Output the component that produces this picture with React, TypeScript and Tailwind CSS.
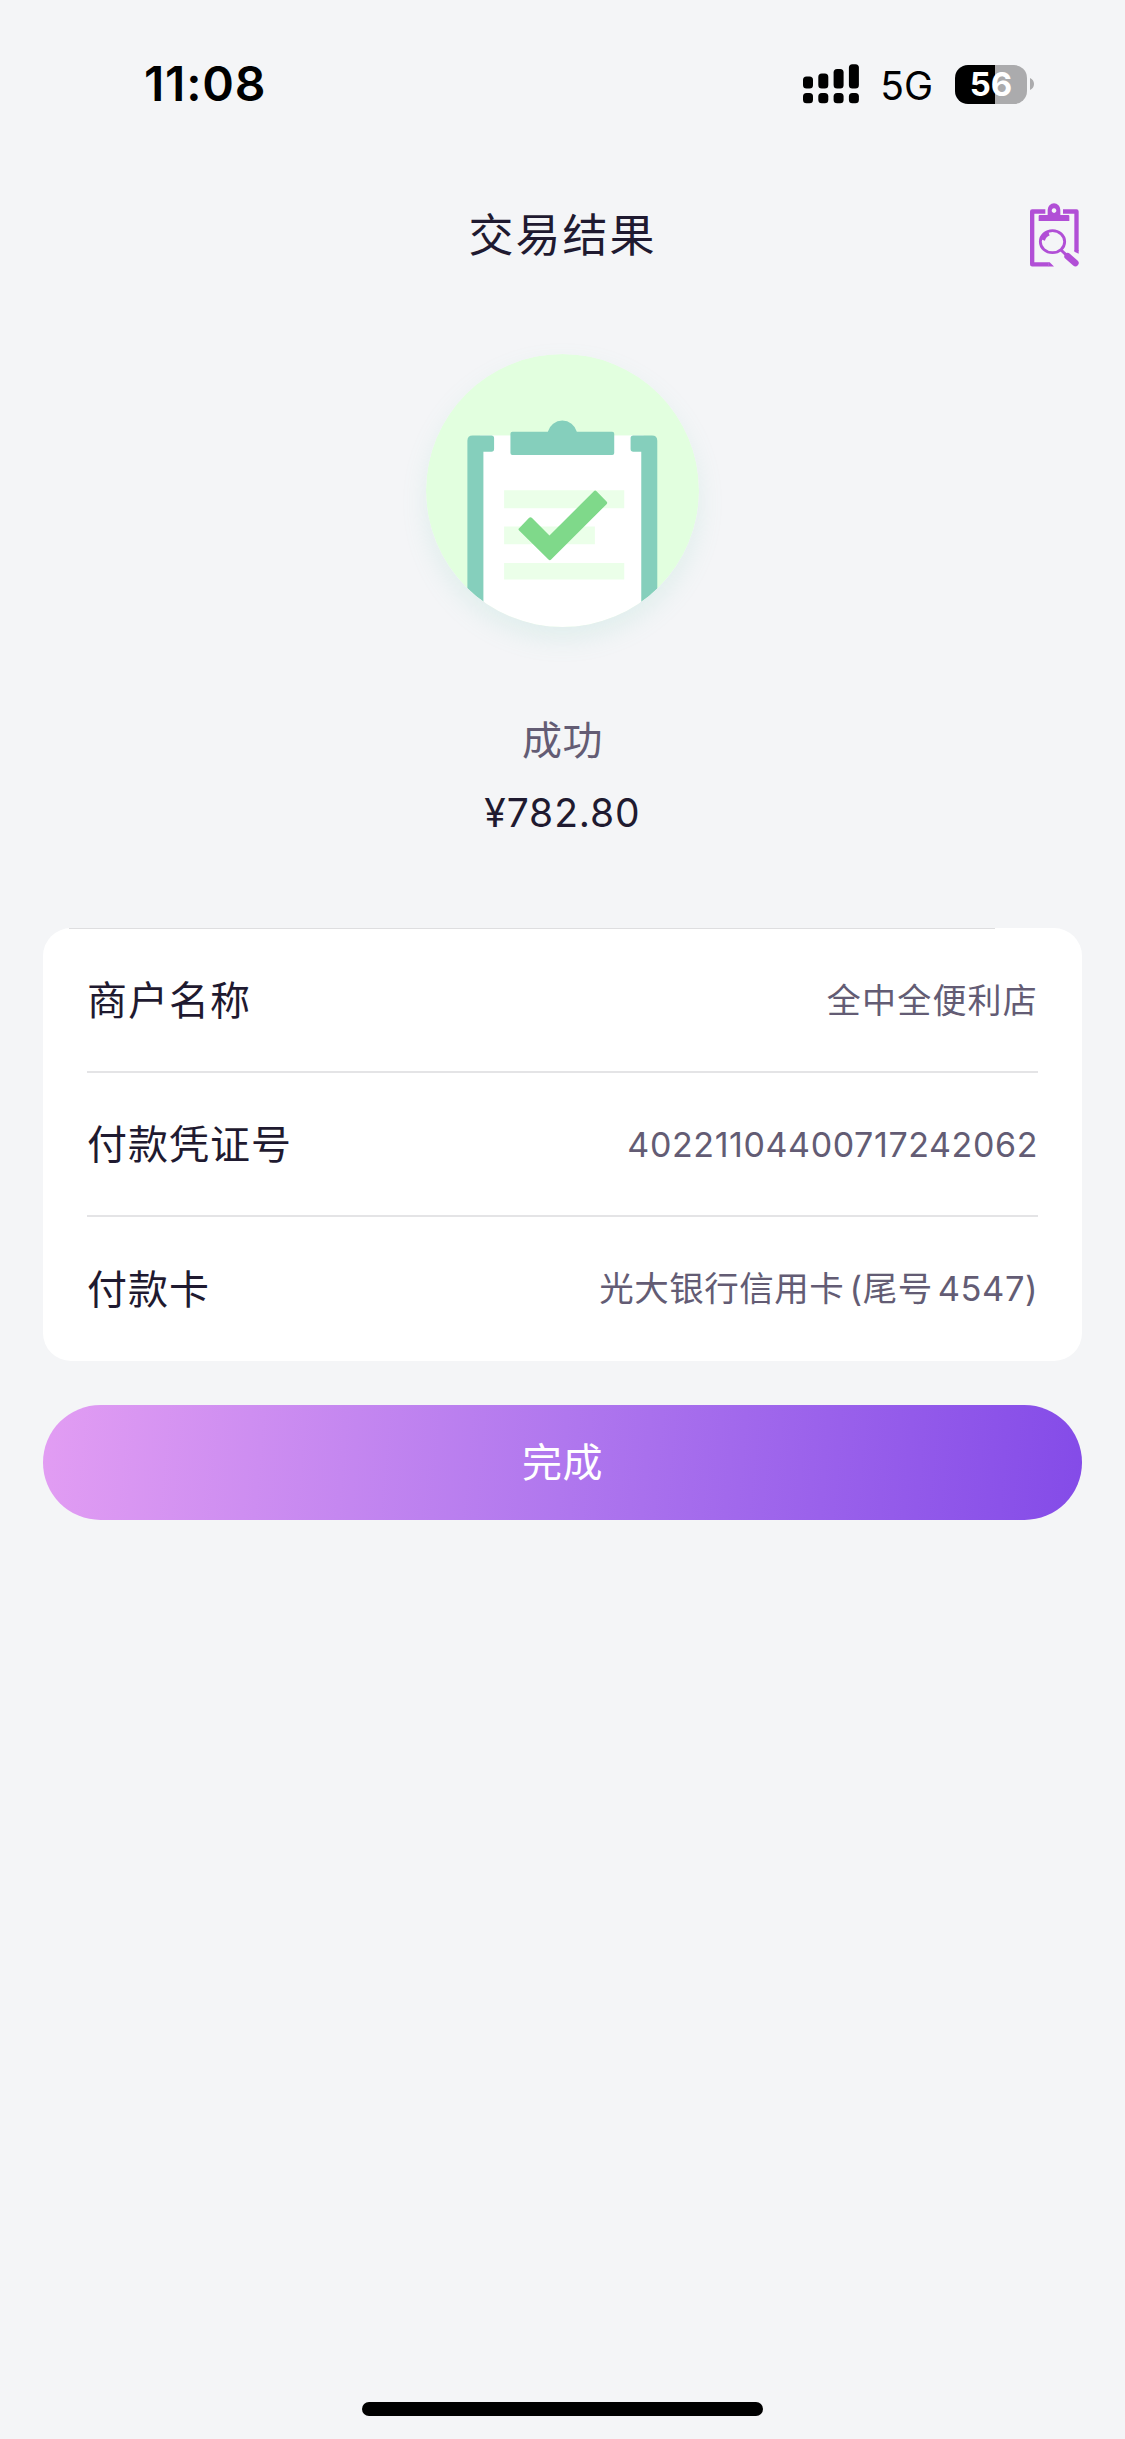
interface IRowProps {
  label: string;
  value: string;
  valueClass: string;
}

const rows: IRowProps[] = [
  { label: "商户名称", value: "全中全便利店", valueClass: "text-[34px] tracking-[1.2px]" },
  { label: "付款凭证号", value: "40221104400717242062", valueClass: "text-[34px] tracking-[0.6px]" },
  {
    label: "付款卡",
    value: "光大银行信用卡 (尾号 4547)",
    valueClass: "text-[34.5px] tracking-[0.5px] [word-spacing:-5px]",
  },
];

function StatusBar() {
  return (
    <div className="flex h-[168px] items-center justify-between pr-[91px] pl-[144px] text-black">
      <span className="text-[48px] leading-none font-semibold tracking-[0.8px]">11:08</span>
      <div className="flex items-center">
        <svg width="56" height="40" viewBox="0 0 56 40">
          <rect x="0" y="12.5" width="10" height="12" rx="3.5" />
          <rect x="15.3" y="9.5" width="10" height="15" rx="3.5" />
          <rect x="30.6" y="5" width="10" height="19.5" rx="3.5" />
          <rect x="45.9" y="0.3" width="10" height="24.2" rx="3.5" />
          <rect x="0" y="29" width="10" height="10.3" rx="3.5" />
          <rect x="15.3" y="29" width="10" height="10.3" rx="3.5" />
          <rect x="30.6" y="29" width="10" height="10.3" rx="3.5" />
          <rect x="45.9" y="29" width="10" height="10.3" rx="3.5" />
        </svg>
        <span className="mt-[2px] ml-[21px] text-[39px] leading-none">5G</span>
        <div className="ml-[22px] flex h-[39px] w-[72px] items-center justify-center rounded-[13px] bg-[linear-gradient(90deg,#000_56%,#ababad_56%)]">
          <span className="pt-px text-[33px] leading-none font-bold text-white">56</span>
        </div>
        <svg className="ml-[3px]" width="4" height="12" viewBox="0 0 4 12">
          <path d="M0 0c2.400 1 4 3.200 4 6s-1.600 5-4 6z" fill="#ababad" />
        </svg>
      </div>
    </div>
  );
}

function RecordIcon() {
  return (
    <svg width="49" height="64" viewBox="0 0 147 192" fill="none" stroke="#b14fd6">
      <path d="M46 25.500H6.500V184H56" strokeWidth="13" strokeLinejoin="round" />
      <path d="M99 25.500h40.500V144" strokeWidth="13" strokeLinejoin="round" />
      <path d="M55 177.500h4l13 13H55zM133 142h13v10l-13-6z" fill="#b14fd6" stroke="none" />
      <path
        d="M26 54V39q0-3 3-3h24V20a19 19 0 0 1 38 0v16h24q3 0 3 3v15zM72 16a7 7 0 1 0 .1 0z"
        fill="#b14fd6"
        fillRule="evenodd"
        stroke="none"
      />
      <ellipse cx="67.500" cy="116" rx="36.500" ry="33" strokeWidth="8.500" />
      <path d="M39 111q5-15 18-19" strokeWidth="12" />
      <path d="M93 141l18 17" strokeWidth="9" />
      <path d="M113 160l23 20" strokeWidth="20" strokeLinecap="round" />
    </svg>
  );
}

function SuccessIcon() {
  return (
    <svg
      className="h-[273px] w-[273px] rounded-full shadow-[0_12px_24px_rgba(133,207,188,0.17)]"
      viewBox="78 72 818 818"
    >
      <defs>
        <clipPath id="disc">
          <circle cx="487" cy="481" r="409" />
        </clipPath>
      </defs>
      <g clipPath="url(#disc)">
        <rect x="78" y="72" width="818" height="818" fill="#e2ffdf" />
        <rect x="240" y="316" width="490" height="600" fill="#fff" />
        <path d="M202 900V332q0-16 16-16h56q8 0 8 8v33q0 8-8 8h-24v535z" fill="#85cfbc" />
        <path d="M771 900V332q0-16-16-16h-56q-8 0-8 8v33q0 8 8 8h24v535z" fill="#85cfbc" />
        <path d="M443 305a45 45 0 0 1 87 0h106q6 0 6 6v58q0 6-6 6H337q-6 0-6-6v-58q0-6 6-6z" fill="#85cfbc" />
        <path d="M312 480h360v54H312zM312 589h272v53H312zM312 698h360v50H312z" fill="#ebffe9" />
        <path
          d="M357 594l30-31q4-4 8 0l53 53 133-133q4-4 8 0l30 31q4 4 0 8L453 688q-4 4-8 0l-88-87q-4-4 0-7z"
          fill="#7fd98a"
        />
      </g>
    </svg>
  );
}

function Row(props: IRowProps) {
  return (
    <div className="flex h-[144px] items-center justify-between border-b-2 border-[#e4e4e6] last:border-b-0">
      <span className="pt-[2px] text-[40px] tracking-[1px] text-[#1f1a30]">{props.label}</span>
      <span className={`text-[#635c74] ${props.valueClass}`}>{props.value}</span>
    </div>
  );
}

export default function App() {
  return (
    <div className="flex h-[2439px] w-[1125px] flex-col bg-[#f4f5f7] font-[Inter,'Noto_Sans_CJK_SC',sans-serif]">
      <StatusBar />

      <div className="grid h-[133px] grid-cols-[1fr_auto_1fr] items-center pr-[46px] pl-[46px]">
        <span />
        <h1 className="pt-[2px] text-[45px] leading-none tracking-[2px] text-[#1f1a30]">交易结果</h1>
        <div className="flex justify-end">
          <RecordIcon />
        </div>
      </div>

      <div className="flex flex-col items-center pt-[53px]">
        <SuccessIcon />
        <p className="mt-[84px] text-[40px] leading-[60px] tracking-[0.6px] text-[#635c74]">成功</p>
        <p className="mt-[12px] text-[39px] leading-[60px] tracking-[0.9px] text-[#1f1a30]">¥782.80</p>
      </div>

      {/* 交易明细 */}
      <div className="mx-[43px] mt-[85px] flex h-[433px] flex-col rounded-[28px] bg-white">
        <div className="mr-[87px] ml-[26px] h-px shrink-0 bg-[#dedee0]" />
        <div className="flex flex-col px-[44px]">
          {rows.map((row) => (
            <Row key={row.label} {...row} />
          ))}
        </div>
      </div>

      <button
        type="button"
        className="mx-[43px] mt-[44px] h-[115px] rounded-full bg-[linear-gradient(95deg,#e29df3_0%,#b077ee_50%,#844be8_100%)] text-[40px] tracking-[0.6px] text-white"
      >
        完成
      </button>

      <div className="mx-auto mt-auto mb-[23px] h-[14px] w-[401px] rounded-full bg-black" />
    </div>
  );
}
